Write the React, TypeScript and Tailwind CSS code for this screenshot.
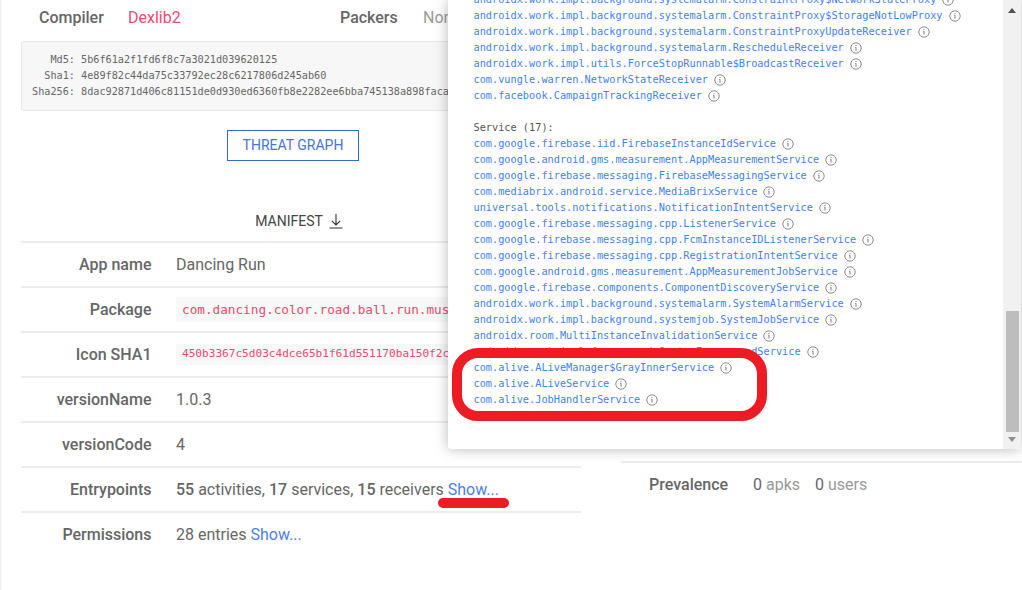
const sans = "font-['Roboto',sans-serif]";

const receivers = [
  "androidx.work.impl.background.systemalarm.ConstraintProxy$NetworkStateProxy",
  "androidx.work.impl.background.systemalarm.ConstraintProxy$StorageNotLowProxy",
  "androidx.work.impl.background.systemalarm.ConstraintProxyUpdateReceiver",
  "androidx.work.impl.background.systemalarm.RescheduleReceiver",
  "androidx.work.impl.utils.ForceStopRunnable$BroadcastReceiver",
  "com.vungle.warren.NetworkStateReceiver",
  "com.facebook.CampaignTrackingReceiver",
];

const services = [
  "com.google.firebase.iid.FirebaseInstanceIdService",
  "com.google.android.gms.measurement.AppMeasurementService",
  "com.google.firebase.messaging.FirebaseMessagingService",
  "com.mediabrix.android.service.MediaBrixService",
  "universal.tools.notifications.NotificationIntentService",
  "com.google.firebase.messaging.cpp.ListenerService",
  "com.google.firebase.messaging.cpp.FcmInstanceIDListenerService",
  "com.google.firebase.messaging.cpp.RegistrationIntentService",
  "com.google.android.gms.measurement.AppMeasurementJobService",
  "com.google.firebase.components.ComponentDiscoveryService",
  "androidx.work.impl.background.systemalarm.SystemAlarmService",
  "androidx.work.impl.background.systemjob.SystemJobService",
  "androidx.room.MultiInstanceInvalidationService",
  "androidx.work.impl.foreground.SystemForegroundService",
  "com.alive.ALiveManager$GrayInnerService",
  "com.alive.ALiveService",
  "com.alive.JobHandlerService",
];

function InfoIcon() {
  return (
    <svg width="12" height="12" viewBox="0 0 12 12" fill="none" className="shrink-0">
      <circle cx="6" cy="6" r="5.2" stroke="#8a8a8a" strokeWidth="1" />
      <path d="M6 3.2v.9M5.3 5.3H6v3.2" stroke="#777" strokeWidth="1" />
    </svg>
  );
}

function Entry({ name }: { name: string }) {
  return (
    <div className="flex h-4 items-center gap-[6px]">
      <span className="text-[#3f81f0]">{name}</span>
      <InfoIcon />
    </div>
  );
}

function Row({ label, children }: { label: string; children: React.ReactNode }) {
  return (
    <div className="flex h-[45px] items-center border-b-2 border-[#ececec]">
      <div className="w-[130.5px] shrink-0 text-right font-medium">{label}</div>
      <div className="ml-[24.5px] flex min-w-0 items-center whitespace-pre">{children}</div>
    </div>
  );
}

function HashLine({ k, v }: { k: string; v: string }) {
  return (
    <div className="flex h-4 items-center">
      <span className="w-[52px] shrink-0 text-right">{k}</span>
      <span className="ml-[6px]">{v}</span>
    </div>
  );
}

export default function App() {
  return (
    <div className={`relative flex h-[590px] w-[1022px] overflow-hidden border-l-2 border-[#f1f1f1] bg-white text-base text-[#666666] ${sans}`}>
      <main className="ml-[19px] w-[560px] shrink-0">
        <div className="flex h-[41px] items-center pb-[5px] pl-[18px]">
          <span className="w-[89px] font-medium">Compiler</span>
          <span className="w-[212px] text-[#f8476f]">Dexlib2</span>
          <span className="w-[83px] font-medium">Packers</span>
          <span className="text-[#999999]">None</span>
        </div>
        <div className="h-[70px] overflow-hidden rounded-[3px] border border-[#e6e6e6] bg-[#f7f7f7] pt-[10px] pl-[1px] font-['DejaVu_Sans_Mono',monospace] text-[10.2px] whitespace-nowrap text-[#666666]">
          <HashLine k="Md5:" v="5b6f61a2f1fd6f8c7a3021d039620125" />
          <HashLine k="Sha1:" v="4e89f82c44da75c33792ec28c6217806d245ab60" />
          <HashLine k="Sha256:" v="8dac92871d406c81151de0d930ed6360fb8e2282ee6bba745138a898facae0d1" />
        </div>
        <div className="mt-[19px] flex justify-center pr-4">
          <button className="flex h-[31px] w-[132px] items-center justify-center border border-[#2f69dc] pb-[2px] text-sm text-[#4672dc]">
            THREAT GRAPH
          </button>
        </div>
        <div className="mt-[50px] flex h-[20px] items-center justify-center gap-[6px] pr-1 text-sm text-[#444444]">
          <span>MANIFEST</span>
          <svg width="14" height="16" viewBox="0 0 14 16" fill="none" stroke="#333" strokeWidth="1.1">
            <path d="M7 1v11M2.8 7.8 7 12l4.2-4.2M0.5 15h13" />
          </svg>
        </div>
        <div className="mt-[10px] border-t-2 border-[#ececec]">
          <Row label="App name">Dancing Run</Row>
          <Row label="Package">
            <code className="bg-[#f8f8f8] px-[6px] py-[3px] font-['DejaVu_Sans_Mono',monospace] text-[12.7px] text-[#ea4a6e]">com.dancing.color.road.ball.run.music</code>
          </Row>
          <Row label="Icon SHA1">
            <code className="bg-[#f8f8f8] px-[6px] py-[2px] font-['DejaVu_Sans_Mono',monospace] text-[11.1px] text-[#ea4a6e]">450b3367c5d03c4dce65b1f61d551170ba150f2c</code>
          </Row>
          <Row label="versionName">1.0.3</Row>
          <Row label="versionCode">4</Row>
          <Row label="Entrypoints">
            <b className="font-medium">55</b> activities, <b className="font-medium">17</b> services, <b className="font-medium">15</b> receivers <span className="text-[#4a7fe8]">Show...</span>
          </Row>
          <div className="flex h-[43px] items-center">
            <div className="w-[130.5px] shrink-0 text-right font-medium">Permissions</div>
            <div className="ml-[24.5px] whitespace-pre">28 entries <span className="text-[#4a7fe8]">Show...</span></div>
          </div>
        </div>
      </main>

      <aside className="ml-[40px] flex-1 pt-[461px]">
        <div className="flex h-[45px] items-center border-t-2 border-[#ececec] pl-7">
          <span className="w-[104px] font-medium">Prevalence</span>
          <span>0</span>
          <span className="ml-1 w-[49px] text-[#999999]">apks</span>
          <span>0</span>
          <span className="ml-1 text-[#999999]">users</span>
        </div>
      </aside>

      {/* Modal that lies over the page */}
      <div className="absolute top-0 left-[446px] flex h-[449px] w-[573px] overflow-hidden rounded-b-[3px] bg-white shadow-[0_0_14px_rgba(0,0,0,0.28)]">
        <div className="min-w-0 flex-1 overflow-hidden pl-[25.5px] font-['DejaVu_Sans_Mono',monospace] text-[10.25px] whitespace-nowrap">
          <div className="-mt-[8px]">
            {receivers.map((n) => (
              <Entry key={n} name={n} />
            ))}
            <div className="mt-4 flex h-4 items-center text-[#555555]">Service (17):</div>
            {services.map((n) => (
              <Entry key={n} name={n} />
            ))}
          </div>
        </div>
        <div className="flex w-[18px] shrink-0 flex-col items-center bg-[#f1f1f1]">
          <svg width="8" height="5" viewBox="0 0 8 5" className="mt-2 shrink-0"><path d="M4 0 8 5H0z" fill="#505050" /></svg>
          <div className="mt-[298px] h-[121px] w-[13px] bg-[#bdbdbd]" />
          <svg width="8" height="5" viewBox="0 0 8 5" className="mt-[5px] shrink-0"><path d="M4 5 8 0H0z" fill="#8f8f8f" /></svg>
        </div>
      </div>

      {/* Hand-drawn red annotations */}
      <div className="absolute top-[348px] left-[450px] h-[73px] w-[315px] rounded-[26px] border-[10px] border-[#ed1c24]" />
      <div className="absolute top-[498px] left-[436px] h-[10px] w-[71px] rounded-[5px] bg-[#ed1c24]" />
    </div>
  );
}
